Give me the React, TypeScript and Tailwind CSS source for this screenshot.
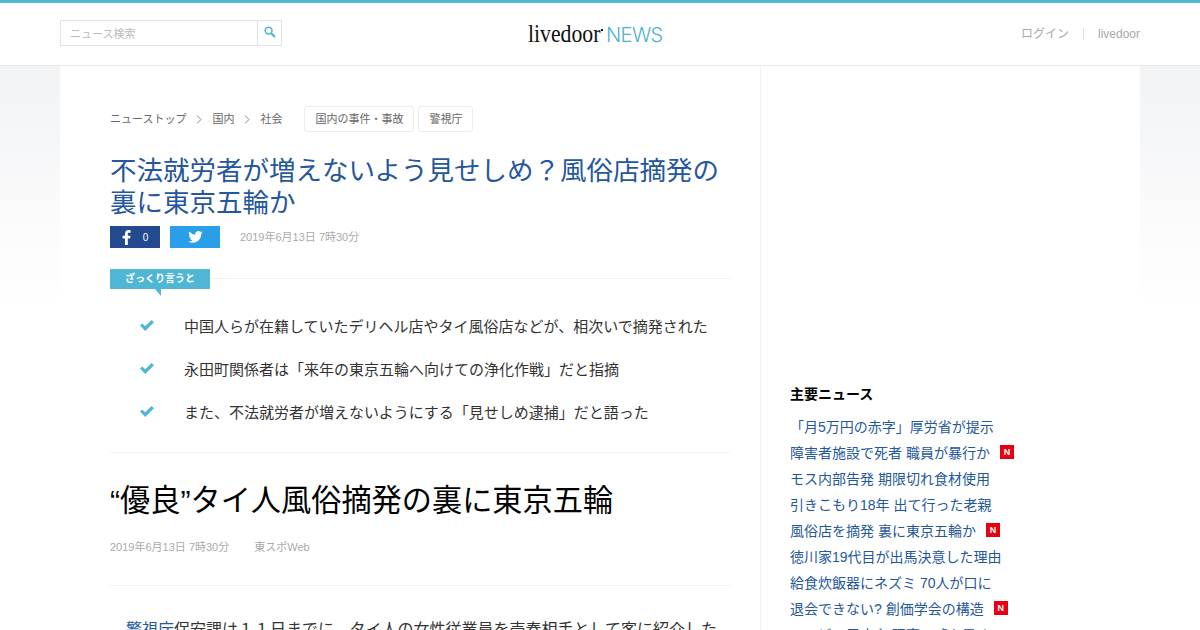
const sans = "font-['Liberation_Sans','Noto_Sans_CJK_JP',sans-serif]";

const summary = [
  "中国人らが在籍していたデリヘル店やタイ風俗店などが、相次いで摘発された",
  "永田町関係者は「来年の東京五輪へ向けての浄化作戦」だと指摘",
  "また、不法就労者が増えないようにする「見せしめ逮捕」だと語った",
];

const news = [
  { title: "「月5万円の赤字」厚労省が提示" },
  { title: "障害者施設で死者 職員が暴行か", isNew: true },
  { title: "モス内部告発 期限切れ食材使用" },
  { title: "引きこもり18年 出て行った老親" },
  { title: "風俗店を摘発 裏に東京五輪か", isNew: true },
  { title: "徳川家19代目が出馬決意した理由" },
  { title: "給食炊飯器にネズミ 70人が口に" },
  { title: "退会できない? 創価学会の構造", isNew: true },
  { title: "コンビニ元店主 理事の嘘を暴く" },
];

function Chevron() {
  return (
    <svg width="6" height="9" viewBox="0 0 6 9" fill="none" stroke="#888" strokeWidth="1">
      <path d="M1 .5l4 4-4 4" />
    </svg>
  );
}

function Check() {
  return (
    <svg width="14" height="11" viewBox="0 0 14 11" fill="#4fb6d3">
      <path d="M0 5.600 2.300 3.400 5.200 6.200 11.600 0 14 2.300 5.200 11z" />
    </svg>
  );
}

export default function App() {
  return (
    <div className={`${sans} h-[630px] overflow-hidden bg-white text-[#333]`}>
      <header className="h-[66px] border-t-[3px] border-b border-t-[#4fb6d3] border-b-[#e8e8e8] bg-white px-[60px] flex items-center relative">
        <div className="flex h-[26px] w-[222px] border border-[#e0e3e5] -mt-[2px]">
          <div className="flex-1 pl-[9px] text-[11px] leading-[26px] text-[#bbb]">ニュース検索</div>
          <div className="w-[24px] border-l border-[#e0e3e5] flex items-center justify-center pb-[2px] pl-[1px]">
            <svg width="12" height="12" viewBox="0 0 12 12" fill="none" stroke="#4fb6d3">
              <circle cx="4.600" cy="4.600" r="3.400" strokeWidth="1.600" />
              <path d="M7.200 7.200 11 11" strokeWidth="2.200" />
            </svg>
          </div>
        </div>
        <div className="absolute left-[528px] top-[17px] flex items-baseline h-[28px]">
          <span className="font-['Liberation_Serif',serif] text-[25px] leading-[28px] text-[#111] w-[73px] origin-left scale-x-[0.87] inline-block whitespace-nowrap">livedoor</span>
          <span className="w-[2px] h-[2px] bg-[#111] self-start mt-[9px] mr-[3px]" />
          <span className="text-[20px] leading-[28px] text-[#4fb0d0] font-['Inter',sans-serif] font-light tracking-[-0.6px]">NEWS</span>
        </div>
        <div className="ml-auto flex items-center text-[12px] text-[#aaa] -mt-[1px]">
          <span>ログイン</span>
          <span className="mx-[14px] w-px h-[12px] bg-[#e0e0e0]" />
          <span>livedoor</span>
        </div>
      </header>

      <div className="h-[564px] bg-gradient-to-b from-[#f2f3f5] to-white to-[240px] px-[60px]">
        <div className="h-full bg-white flex overflow-hidden">
          <main className="w-[701px] shrink-0 border-r border-[#f3f3f3] pl-[50px] pr-[30px] pt-[40px]">
            <div className="flex items-center h-[26px] text-[11px] leading-[28px] text-[#666]">
              <span>ニューストップ</span>
              <span className="mx-[10px]"><Chevron /></span>
              <span>国内</span>
              <span className="mx-[10px]"><Chevron /></span>
              <span>社会</span>
              <span className="ml-[22px] h-[26px] px-[10px] leading-[25px] border border-[#ececec] rounded-[3px]">国内の事件・事故</span>
              <span className="ml-[4px] h-[26px] px-[10px] leading-[25px] border border-[#ececec] rounded-[3px]">警視庁</span>
            </div>

            <h1 className="mt-[23px] text-[26.5px] leading-[32px] text-[#24579c] font-normal">
              不法就労者が増えないよう見せしめ？風俗店摘発の裏に東京五輪か
            </h1>

            <div className="mt-[7px] flex items-center h-[22px]">
              <div className="w-[50px] h-[22px] bg-[#23498f] flex items-center justify-center gap-[12px] text-white text-[10px]">
                <svg width="9" height="15" viewBox="0 0 9 15" fill="#fff">
                  <path d="M5.800 15V8.400h2.300l.4-2.700H5.800V4c0-.8.2-1.300 1.300-1.300h1.500V.3C8.300.2 7.500.1 6.500.1 4.400.1 3 1.400 3 3.700v2H.6v2.700H3V15z" />
                </svg>
                <span>0</span>
              </div>
              <div className="ml-[10px] w-[50px] h-[22px] bg-[#2a9fe8] flex items-center justify-center">
                <svg width="15" height="12" viewBox="0 0 24 20" fill="#fff">
                  <path d="M24 2.400a9.800 9.800 0 0 1-2.800.8A4.900 4.900 0 0 0 23.300.5a9.800 9.800 0 0 1-3.100 1.200 4.900 4.900 0 0 0-8.400 4.500A14 14 0 0 1 1.700.9a4.900 4.900 0 0 0 1.500 6.600 4.900 4.900 0 0 1-2.200-.6v.1a4.900 4.900 0 0 0 3.900 4.800 4.900 4.900 0 0 1-2.200.1 4.900 4.900 0 0 0 4.600 3.400A9.900 9.900 0 0 1 0 17.300 14 14 0 0 0 7.500 19.500c9.100 0 14-7.500 14-14v-.6A10 10 0 0 0 24 2.400z" />
                </svg>
              </div>
              <span className="ml-[20px] text-[11px] text-[#aaa]">2019年6月13日 7時30分</span>
            </div>

            <div className="mt-[21px] flex items-start relative h-[20px]">
              <div className="relative w-[100px] h-[20px] bg-[#4fb6d3] text-white text-[10px] font-bold leading-[20px] text-center z-10">
                ざっくり言うと
                <span className="absolute left-[45px] top-[20px] w-0 h-0 border-t-[7px] border-l-[6px] border-t-[#4fb6d3] border-l-transparent" />
              </div>
              <div className="flex-1 h-px bg-[#f3f3f3] mt-[9px]" />
            </div>

            <ul className="pt-[17px] pb-[17px] border-b border-[#f3f3f3]">
              {summary.map((item) => (
                <li key={item} className="flex h-[43px] items-center pl-[30px] text-[15px] text-[#333]">
                  <span className="w-[44px] -mt-[5px] flex"><Check /></span>
                  <span className="whitespace-nowrap">{item}</span>
                </li>
              ))}
            </ul>

            <h2 className="mt-[28px] text-[30.2px] leading-[40px] text-[#000] font-normal whitespace-nowrap">“優良”タイ人風俗摘発の裏に東京五輪</h2>

            <div className="mt-[18px] flex text-[11px] leading-[16px] text-[#aaa] gap-[25px]">
              <span>2019年6月13日 7時30分</span>
              <span>東スポWeb</span>
            </div>

            <div className="mt-[30px] border-t border-[#f3f3f3] pt-[30px] text-[16px] leading-[28px] text-[#333] whitespace-nowrap pl-[16px] h-[60px] overflow-hidden">
              <span className="text-[#24579c]">警視庁</span>保安課は１１日までに、タイ人の女性従業員を売春相手として客に紹介した
            </div>
          </main>

          <aside className="pl-[29px] pt-[318px] flex-1">
            <h3 className="text-[14px] leading-[20px] font-bold text-[#000]">主要ニュース</h3>
            <ul className="mt-[10px]">
              {news.map((n) => (
                <li key={n.title} className="h-[26px] flex items-center text-[14px] text-[#24579c] whitespace-nowrap">
                  <span>{n.title}</span>
                  {n.isNew && (
                    <span className="ml-[10px] -mt-[2px] w-[14px] h-[14px] bg-[#e60012] text-white text-[9px] font-bold leading-[14px] text-center">N</span>
                  )}
                </li>
              ))}
            </ul>
          </aside>
        </div>
      </div>
    </div>
  );
}
